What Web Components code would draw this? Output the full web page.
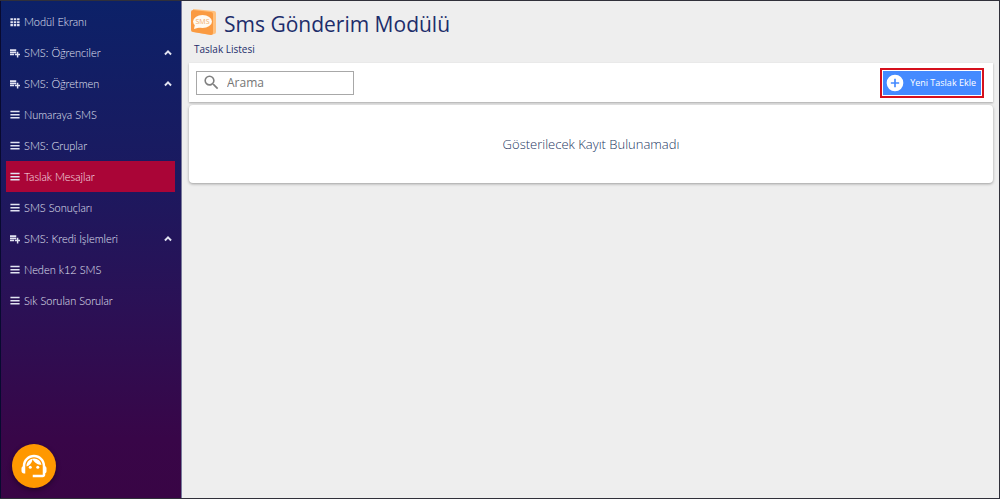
<!DOCTYPE html>
<html lang="tr">
<head>
<meta charset="utf-8">
<meta name="viewport" content="width=device-width, initial-scale=1">
<title>Sms Gönderim Modülü</title>
<style>
  html, body {
    height: 100%;
  }
  body {
    margin: 0;
    font-family: "Open Sans", "Noto Sans", sans-serif;
    color: #1d2d6b;
    background: #eeeeee;
  }
</style>
</head>
<body>
<sms-app>
  <side-menu slot="menu">
    <menu-item icon="grid">Modül Ekranı</menu-item>
    <menu-item icon="list-add" group>SMS: Öğrenciler</menu-item>
    <menu-item icon="list-add" group>SMS: Öğretmen</menu-item>
    <menu-item icon="list">Numaraya SMS</menu-item>
    <menu-item icon="list">SMS: Gruplar</menu-item>
    <menu-item icon="list" active>Taslak Mesajlar</menu-item>
    <menu-item icon="list">SMS Sonuçları</menu-item>
    <menu-item icon="list-add" group>SMS: Kredi İşlemleri</menu-item>
    <menu-item icon="list">Neden k12 SMS</menu-item>
    <menu-item icon="list">Sık Sorulan Sorular</menu-item>
  </side-menu>
  <page-header>
    Sms Gönderim Modülü
    <span slot="sub">Taslak Listesi</span>
  </page-header>
  <tool-bar>
    <search-box placeholder="Arama"></search-box>
    <add-button slot="action">Yeni Taslak Ekle</add-button>
  </tool-bar>
  <empty-card>Gösterilecek Kayıt Bulunamadı</empty-card>
</sms-app>

<script>
const icons = {
  "grid": '<path d="M1 3h6v5H1zM9 3h6v5H9zM17 3h6v5h-6zM1 10h6v5H1zM9 10h6v5H9zM17 10h6v5h-6zM1 17h6v5H1zM9 17h6v5H9zM17 17h6v5h-6z"/>',
  "list": '<path d="M1 2h22v3.500H1zM1 9.500h22V13H1zM1 17h22v3.500H1z"/>',
  "list-add": '<path d="M0 3h15v4H0zM0 8.500h15v4H0zM0 14h10v3.500H0zM16.500 9H20v5h4v3.500h-4v5h-3.500v-5H12V14h4.500z"/>',
  "chevron": '<path d="M12 5l-9 9 3.200 3.200 5.800-5.800 5.800 5.800L21 14z"/>',
  "search": '<path d="M15.500 14h-.79l-.28-.27A6.470 6.470 0 0 0 16 9.500 6.500 6.500 0 1 0 9.500 16c1.610 0 3.090-.59 4.230-1.570l.27.28v.79l5 4.990L20.490 19l-4.990-5zm-6 0C7.010 14 5 11.990 5 9.500S7.010 5 9.500 5 14 7.010 14 9.500 11.990 14 9.500 14z"/>',
  "add": '<path d="M12 2a10 10 0 1 0 0 20 10 10 0 0 0 0-20zm5 11h-4v4h-2v-4H7v-2h4V7h2v4h4z"/>',
  "support": '<path d="M21 12.220C21 6.730 16.740 3 12 3c-4.690 0-9 3.650-9 9.280-.6.340-1 .98-1 1.720v2c0 1.100.9 2 2 2h1v-6.100c0-3.870 3.130-7 7-7s7 3.130 7 7V19h-8v2h8c1.100 0 2-.9 2-2v-1.220c.59-.31 1-.92 1-1.640v-2.300c0-.7-.41-1.310-1-1.620z"/><circle cx="9" cy="13" r="1.200"/><circle cx="15" cy="13" r="1.200"/><path d="M18 11.030A6.040 6.040 0 0 0 12.050 6c-3.030 0-6.290 2.510-6.030 6.450a8.075 8.075 0 0 0 4.860-5.890c1.310 2.630 4 4.440 7.120 4.470z"/>'
};

function svg(name) {
  return `<svg class="${name}" viewBox="0 0 24 24" fill="currentColor" aria-hidden="true">${icons[name]}</svg>`;
}

class SmsApp extends HTMLElement {
  constructor() {
    super();
    this.attachShadow({ mode: "open" });
    this.shadowRoot.innerHTML = `
    <style>
      :host {
        display: grid;
        grid-template-columns: 182px 1fr;
        min-height: 100vh;
        box-sizing: border-box;
        border: 1px solid #30303a;
        border-left: 0;
      }
      main {
        display: flex;
        flex-direction: column;
        gap: 3px;
        min-width: 0;
        padding: 0 6px 16px 7px;
      }
    </style>
    <slot name="menu"></slot>
    <main><slot></slot></main>
    `;
  }
}

class SideMenu extends HTMLElement {
  constructor() {
    super();
    this.attachShadow({ mode: "open" });
    this.shadowRoot.innerHTML = `
    <style>
      :host {
        display: flex;
        flex-direction: column;
        justify-content: space-between;
        box-sizing: border-box;
        padding: 5px 6px 10px 5px;
        border-left: 1px solid #080a30;
        border-right: 1px solid #77789a;
        background: linear-gradient(#0c2168, #1a1a60 33%, #2a1156 60%, #380648 88%, #390545);
      }
      nav {
        display: flex;
        flex-direction: column;
      }
      button {
        display: block;
        width: 44px;
        height: 44px;
        margin-left: 6px;
        padding: 7px;
        border: 0;
        border-radius: 50%;
        color: #fff;
        background: #ff9800;
        box-shadow: 0 2px 5px rgba(0, 0, 0, 0.4);
      }
      svg {
        display: block;
      }
    </style>
    <nav><slot></slot></nav>
    <button type="button" aria-label="Destek">${svg("support")}</button>
    `;
  }
}

class MenuItem extends HTMLElement {
  constructor() {
    super();
    this.attachShadow({ mode: "open" });
  }

  connectedCallback() {
    const group = this.hasAttribute("group");
    this.shadowRoot.innerHTML = `
    <style>
      :host {
        display: block;
      }
      a {
        display: flex;
        align-items: center;
        gap: 4px;
        height: 31px;
        padding: 0 2px 0 4px;
        font-family: Lato, sans-serif;
        font-size: 11px;
        font-weight: 300;
        white-space: nowrap;
        text-decoration: none;
        color: #e2e4f4;
      }
      :host([active]) a {
        color: #fbe3ea;
        background: #aa0537;
      }
      span {
        flex: 1;
      }
      svg {
        flex: none;
        width: 10px;
        height: 10px;
        color: #e2e4f2;
      }
    </style>
    <a href="#">${svg(this.getAttribute("icon"))}<span><slot></slot></span>${group ? svg("chevron") : ""}</a>
    `;
  }
}

class PageHeader extends HTMLElement {
  constructor() {
    super();
    this.attachShadow({ mode: "open" });
    this.shadowRoot.innerHTML = `
    <style>
      :host {
        display: block;
        height: 59px;
      }
      .top {
        display: flex;
        align-items: center;
        gap: 7px;
        height: 40px;
        padding: 2px 0 0 1px;
        box-sizing: border-box;
      }
      h1 {
        margin: 0;
        padding-top: 4px;
        font-size: 21px;
        line-height: 30px;
        font-weight: 400;
        white-space: nowrap;
      }
      p {
        margin: 0 0 0 5px;
        font-size: 10px;
        line-height: 16px;
      }
      .logo {
        flex: none;
        width: 27px;
        height: 28px;
      }
    </style>
    <div class="top">
      <svg class="logo" viewBox="0 0 27 28" aria-hidden="true">
        <path d="M3 1 24 3Q26 3 26 5V24Q26 26 24 26L21 27 4 24Z" fill="#ffc07d"/>
        <path d="M3 2Q1 2 1 4V22Q1 24 3 24L21 27Q23 27 23 25V6Q23 4 21 4Z" fill="#fa9a41"/>
        <ellipse cx="12.500" cy="13.500" rx="9.500" ry="6.500" fill="#fffaf2"/>
        <path d="M5 16 4 21 11 19Z" fill="#fffaf2"/>
        <text x="12.500" y="16" text-anchor="middle" font-family="Open Sans, sans-serif" font-size="7" fill="#f2ab68">SMS</text>
      </svg>
      <h1><slot></slot></h1>
    </div>
    <p><slot name="sub"></slot></p>
    `;
  }
}

class ToolBar extends HTMLElement {
  constructor() {
    super();
    this.attachShadow({ mode: "open" });
    this.shadowRoot.innerHTML = `
    <style>
      :host {
        display: flex;
        align-items: center;
        justify-content: space-between;
        box-sizing: border-box;
        min-height: 39px;
        padding: 0 9px 0 7px;
        background: #fff;
        box-shadow: 0 1px 2px rgba(0, 0, 0, 0.3);
      }
    </style>
    <slot></slot>
    <slot name="action"></slot>
    `;
  }
}

class SearchBox extends HTMLElement {
  constructor() {
    super();
    this.attachShadow({ mode: "open" });
  }

  connectedCallback() {
    const text = this.getAttribute("placeholder");
    this.shadowRoot.innerHTML = `
    <style>
      :host {
        display: block;
        width: 158px;
      }
      label {
        display: flex;
        align-items: center;
        gap: 6px;
        height: 24px;
        box-sizing: border-box;
        padding-left: 5px;
        border: 1px solid #a8a8a8;
        color: #808080;
      }
      svg {
        flex: none;
        width: 19px;
        height: 19px;
      }
      input {
        flex: 1;
        min-width: 0;
        padding: 0;
        border: 0;
        outline: 0;
        background: none;
        font: 12px "Open Sans", sans-serif;
        color: #444;
      }
      input::placeholder {
        color: #757575;
      }
    </style>
    <label>${svg("search")}<input type="search" placeholder="${text}" aria-label="${text}"></label>
    `;
  }
}

class AddButton extends HTMLElement {
  constructor() {
    super();
    this.attachShadow({ mode: "open" });
    this.shadowRoot.innerHTML = `
    <style>
      :host {
        display: block;
        padding: 1px;
        border: 2px solid #d5101c;
      }
      button {
        display: flex;
        align-items: center;
        gap: 5px;
        height: 24px;
        padding: 0 5px 0 2px;
        border: 0;
        font: 500 9px "Open Sans", sans-serif;
        white-space: nowrap;
        color: #fff;
        background: #448aff;
      }
      svg {
        width: 20px;
        height: 20px;
      }
    </style>
    <button type="button">${svg("add")}<span><slot></slot></span></button>
    `;
  }
}

class EmptyCard extends HTMLElement {
  constructor() {
    super();
    this.attachShadow({ mode: "open" });
    this.shadowRoot.innerHTML = `
    <style>
      :host {
        display: flex;
        align-items: center;
        justify-content: center;
        min-height: 78px;
        border-radius: 4px;
        font-size: 13px;
        font-weight: 300;
        color: #24365f;
        background: #fff;
        box-shadow: 0 1px 3px rgba(0, 0, 0, 0.35);
      }
    </style>
    <slot></slot>
    `;
  }
}

customElements.define("sms-app", SmsApp);
customElements.define("side-menu", SideMenu);
customElements.define("menu-item", MenuItem);
customElements.define("page-header", PageHeader);
customElements.define("tool-bar", ToolBar);
customElements.define("search-box", SearchBox);
customElements.define("add-button", AddButton);
customElements.define("empty-card", EmptyCard);
</script>
</body>
</html>
